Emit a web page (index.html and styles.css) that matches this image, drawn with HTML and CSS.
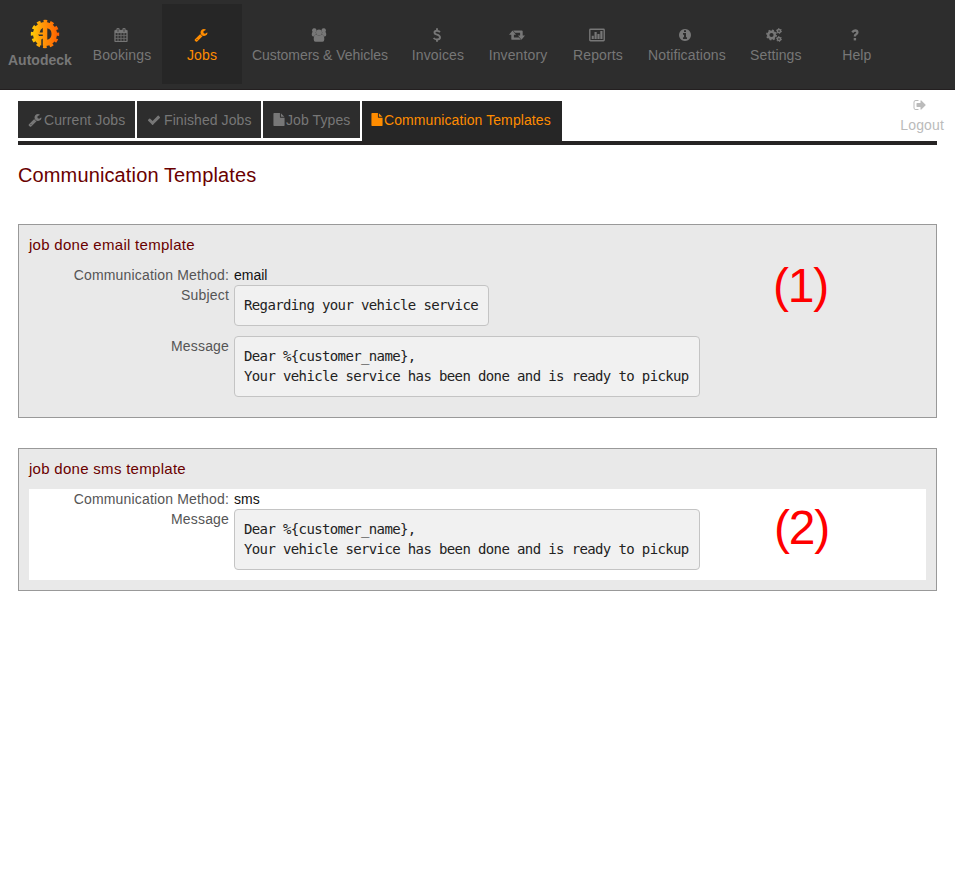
FILE: index.html
```
<!DOCTYPE html>
<html lang="en">
<head>
<meta charset="utf-8">
<title>Autodeck - Communication Templates</title>
<link rel="stylesheet" href="styles.css">
</head>
<body>
<svg class="defs" width="0" height="0" aria-hidden="true">
<symbol id="wrench" viewBox="0 0 1792 1792"><path d="M448 1472q0-26-19-45t-45-19-45 19-19 45 19 45 45 19 45-19 19-45zm644-420l-682 682q-37 37-90 37-52 0-91-37l-106-108q-38-36-38-90 0-53 38-91l681-681q39 98 114.500 173.500t173.500 114.500zm634-435q0 39-23 106-47 134-164.500 217.500t-258.500 83.500q-185 0-316.500-131.500t-131.500-316.500 131.500-316.500 316.500-131.500q58 0 121.500 16.500t107.500 46.500q16 11 16 28t-16 28l-293 169v224l193 107q5-3 79-48.500t135.500-81 70.500-35.500q15 0 23.500 10t8.500 25z"/></symbol>
<symbol id="check" viewBox="0 0 1792 1792"><path d="M1671 566q0 40-28 68l-724 724-136 136q-28 28-68 28t-68-28l-136-136-362-362q-28-28-28-68t28-68l136-136q28-28 68-28t68 28l294 295 656-657q28-28 68-28t68 28l136 136q28 28 28 68z"/></symbol>
<symbol id="file" viewBox="128 0 1536 1792"><path d="M1152 512v-472q22 14 36 28l408 408q14 14 28 36h-472zm-128 32q0 40 28 68t68 28h544v1056q0 40-28 68t-68 28h-1344q-40 0-68-28t-28-68v-1600q0-40 28-68t68-28h800v544z"/></symbol>
</svg>
<header class="topbar">
  <a class="brand">
    <svg class="logo" viewBox="0 0 30 30">
      <defs><linearGradient id="sun" x1="1" y1="0" x2="29" y2="0" gradientUnits="userSpaceOnUse"><stop offset="0" stop-color="#ffd005"/><stop offset=".4" stop-color="#ff9a08"/><stop offset="1" stop-color="#ff5e00"/></linearGradient>
      <mask id="cut"><rect width="30" height="30" fill="#fff"/><path fill="#000" d="M17.300 9.300q4.200.8 4.200 5.700t-4.200 5.700zM12.800 8.800v4.700H9.600q.6-3.300 3.200-4.700zM8 15.500h4.800v1.500H9.200zM11.300 20.500l1.500-1v8.500l-1.500-.5z"/></mask></defs>
      <g mask="url(#cut)"><circle cx="15" cy="15" r="12" fill="url(#sun)"/><circle cx="15" cy="15" r="12.700" fill="none" stroke="url(#sun)" stroke-width="3" stroke-dasharray="3.700 2.950" stroke-dashoffset="1.850"/></g>
    </svg>
    <span class="brand-name">Autodeck</span>
  </a>
  <nav class="nav">
    <a class="item"><svg class="icon calendar" viewBox="0 0 1792 1792"><path d="M192 1664h288v-288h-288v288zm352 0h320v-288h-320v288zm-352-352h288v-320h-288v320zm352 0h320v-320h-320v320zm-352-384h288v-288h-288v288zm736 736h320v-288h-320v288zm-384-736h320v-288h-320v288zm768 736h288v-288h-288v288zm-384-352h320v-320h-320v320zm-352-864v-288q0-13-9.500-22.500t-22.500-9.500h-64q-13 0-22.500 9.500t-9.500 22.500v288q0 13 9.500 22.500t22.500 9.500h64q13 0 22.500-9.500t9.500-22.500zm736 864h288v-320h-288v320zm-384-384h320v-288h-320v288zm384 0h288v-288h-288v288zm32-480v-288q0-13-9.500-22.500t-22.500-9.500h-64q-13 0-22.500 9.500t-9.500 22.500v288q0 13 9.500 22.500t22.500 9.500h64q13 0 22.500-9.500t9.500-22.500zm384-64v1280q0 52-38 90t-90 38h-1408q-52 0-90-38t-38-90v-1280q0-52 38-90t90-38h128v-96q0-66 47-113t113-47h64q66 0 113 47t47 113v96h384v-96q0-66 47-113t113-47h64q66 0 113 47t47 113v96h128q52 0 90 38t38 90z"/></svg><span>Bookings</span></a>
    <a class="item active"><svg class="icon"><use href="#wrench"/></svg><span>Jobs</span></a>
    <a class="item people"><svg class="icon wide" viewBox="0 0 16 15"><path d="M3.200.4a2.300 2.300 0 0 1 2.200 2.200A4 4 0 0 0 5 7C3.900 7 3.300 8 3 9H1.500Q.2 8.800.2 7.300q0-2.800 1-3A2.300 2.300 0 0 1 3.200.4zM12.800.4a2.300 2.300 0 0 0-2.200 2.200A4 4 0 0 1 11 7c1.100 0 1.700 1 2 2h1.500q1.300-.2 1.300-1.700 0-2.800-1-3A2.300 2.300 0 0 0 12.800.4z"/><circle cx="8" cy="4.800" r="3.200"/><path d="M5.200 7q2.800 2 5.600 0 2.900.3 2.900 5 0 2.700-2 2.700H4.300q-2 0-2-2.700 0-4.700 2.900-5z"/></svg><span>Customers &amp; Vehicles</span></a>
    <a class="item"><svg class="icon" viewBox="0 0 14 14"><path class="line" d="M10 4Q8.600 2.700 6.900 2.700 4.500 2.700 4.500 4.500q0 1.500 2.500 2.200 3 .8 3 2.700 0 2.100-2.900 2.100-2.200 0-3.500-1.500M7 .2v2.500m0 8.500v2.500"/></svg><span>Invoices</span></a>
    <a class="item"><svg class="icon wide" viewBox="0 0 16 14"><path d="M3.500 2.400l3.500 4.300H4.900v2.700h5l2 2.400H3.200q-.9 0-.9-.9V6.700H0zM12.500 11.800L9 7.500h2.100V4.800h-5l-2-2.400h8.700q.9 0 .9.900v4.200H16z"/></svg><span>Inventory</span></a>
    <a class="item"><svg class="icon wide" viewBox="0 0 16 14"><path fill-rule="evenodd" d="M1.500.5h13q1.400 0 1.400 1.400v10.200q0 1.400-1.400 1.400h-13Q.1 13.500.1 12.100V1.900Q.1.500 1.500.5zM1.500 1.900v10.200h13V1.900zM2.700 7.700h2.100V11H2.700zM5.500 4h2.200v7H5.500zM8.400 6h2.200v5H8.400zM11.300 3h2.200v8h-2.200z"/></svg><span>Reports</span></a>
    <a class="item"><svg class="icon" viewBox="0 0 1792 1792"><path d="M1152 1376v-160q0-14-9-23t-23-9h-96v-512q0-14-9-23t-23-9h-320q-14 0-23 9t-9 23v160q0 14 9 23t23 9h96v320h-96q-14 0-23 9t-9 23v160q0 14 9 23t23 9h448q14 0 23-9t9-23zm-128-896v-160q0-14-9-23t-23-9h-192q-14 0-23 9t-9 23v160q0 14 9 23t23 9h192q14 0 23-9t9-23zm640 416q0 209-103 385.500t-279.500 279.500-385.500 103-385.500-103-279.500-279.500-103-385.500 103-385.500 279.500-279.500 385.500-103 385.500 103 279.500 279.500 103 385.500z"/></svg><span>Notifications</span></a>
    <a class="item"><svg class="icon wide" viewBox="0 0 16 14"><g class="gear"><circle cx="5.500" cy="7" r="3.300" stroke-width="2.400"/><circle cx="5.500" cy="7" r="4.700" stroke-width="1.500" stroke-dasharray="1.850 1.840"/><circle cx="13" cy="3" r="1.600" stroke-width="1.500"/><circle cx="13" cy="3" r="2.500" stroke-width="1" stroke-dasharray="1.309"/><circle cx="13" cy="11" r="1.600" stroke-width="1.500"/><circle cx="13" cy="11" r="2.500" stroke-width="1" stroke-dasharray="1.309"/></g></svg><span>Settings</span></a>
    <a class="item help"><svg class="icon" viewBox="0 0 14 14"><path class="line query" d="M4.300 4.400Q5.300 2.500 7.200 2.500q2.200 0 2.200 1.900 0 1-1.300 1.800-1.200.7-1.200 1.900v.4"/><path d="M5.700 10h2.400v2.400H5.700z"/></svg><span>Help</span></a>
  </nav>
</header>
<main class="page">
  <div class="subbar">
    <nav class="tabs">
      <a class="tab t1"><svg class="icon"><use href="#wrench"/></svg><span>Current Jobs</span></a>
      <a class="tab t2"><svg class="icon"><use href="#check"/></svg><span>Finished Jobs</span></a>
      <a class="tab t3"><svg class="icon file"><use href="#file"/></svg><span>Job Types</span></a>
      <a class="tab t4 current"><svg class="icon file"><use href="#file"/></svg><span>Communication Templates</span></a>
    </nav>
    <a class="logout"><svg class="icon" viewBox="0 0 1792 1792"><path d="M704 1440q0 4 1 20t.5 26.500-3 23.500-10 19.500-20.500 6.500h-320q-119 0-203.500-84.500t-84.500-203.500v-704q0-119 84.500-203.500t203.500-84.500h320q13 0 22.500 9.500t9.500 22.500q0 4 1 20t.5 26.500-3 23.500-10 19.500-20.500 6.500h-320q-66 0-113 47t-47 113v704q0 66 47 113t113 47h312l11.500 1 11.500 3 8 5.500 7 9 2 13.500zm928-544q0 26-19 45l-544 544q-19 19-45 19t-45-19-19-45v-288h-448q-26 0-45-19t-19-45v-384q0-26 19-45t45-19h448v-288q0-26 19-45t45-19 45 19l544 544q19 19 19 45z"/></svg><span>Logout</span></a>
  </div>
  <h1>Communication Templates</h1>
  <section class="card">
    <h2>job done email template</h2>
    <dl>
      <dt>Communication Method:</dt><dd>email</dd>
      <dt>Subject</dt><dd><pre>Regarding your vehicle service</pre></dd>
      <dt>Message</dt><dd><pre>Dear %{customer_name},
Your vehicle service has been done and is ready to pickup</pre></dd>
    </dl>
    <span class="mark first">(1)</span>
  </section>
  <section class="card">
    <h2>job done sms template</h2>
    <dl class="plain">
      <dt>Communication Method:</dt><dd>sms</dd>
      <dt>Message</dt><dd><pre>Dear %{customer_name},
Your vehicle service has been done and is ready to pickup</pre></dd>
    </dl>
    <span class="mark second">(2)</span>
  </section>
</main>
</body>
</html>
```
FILE: styles.css
```
* { box-sizing: border-box; }
body { margin: 0; background: #fff; color: #111; font: 14px/20px "Liberation Sans", Arial, sans-serif; }
.defs { position: absolute; }
.topbar { display: flex; height: 90px; background: #2d2d2d; border-bottom: 1px solid #231f20; color: #777; }
.brand { width: 82px; padding-top: 19px; }
.logo { display: block; width: 30px; height: 30px; margin-left: 30px; }
.brand-name { display: block; margin: 1px 0 0 8px; font-weight: bold; white-space: nowrap; }
.nav { display: flex; padding-top: 4px; letter-spacing: .12px; }
.item { display: flex; flex-direction: column; align-items: center; min-width: 80px; height: 80px; padding: 24px 10px 0; white-space: nowrap; }
.people { width: 156px; letter-spacing: -.04px; }
.help { padding-left: 12px; }
.icon { display: block; width: 14px; height: 14px; fill: currentColor; flex: none; }
.item .icon { margin: 0 3px 3px 0; }
.item .wide { width: 16px; }
.calendar { stroke: currentColor; stroke-width: 36; }
.item.active { background: #262626; color: #ff8c00; }
.line { fill: none; stroke: currentColor; stroke-width: 1.9; }
.query { stroke-width: 2.3; }
.gear { fill: none; stroke: currentColor; }
.page { padding: 0 18px; }
.subbar { display: flex; justify-content: space-between; height: 55px; padding-top: 11px; border-bottom: 4px solid #262424; }
.tabs { display: flex; gap: 2px; letter-spacing: .09px; }
.tab { display: flex; height: 37px; padding: 9px 0 0 10px; background: #2d2d2d; color: #777; white-space: nowrap; }
.tab .icon { margin: 3px 2px 0 0; }
.tab .file { width: 12px; height: 13px; margin-right: 1px; }
.t1 { width: 117px; }
.t2 { width: 124px; }
.tab.t2 .icon { margin-right: 3px; }
.t3 { width: 97px; }
.t4 { width: 200px; padding-left: 9px; }
.tab.current { height: 40px; background: #262626; color: #ff8c00; }
.logout { display: flex; flex-direction: column; align-items: center; margin: -4px -7px 0 0; color: #bbb; letter-spacing: .15px; }
.logout .icon { margin: 1px 4px 3px 0; }
h1 { margin: 20px 0 39px; color: #6a0000; font-size: 20px; font-weight: normal; line-height: 20px; letter-spacing: .13px; }
.card { position: relative; margin-bottom: 30px; padding: 10px; background: #e9e9e9; border: 1px solid #999; }
h2 { margin: 0 0 10px; color: #6a0000; font-size: 15px; font-weight: normal; line-height: 20px; letter-spacing: .29px; }
dl { display: grid; grid-template-columns: 200px 1fr; column-gap: 5px; margin: 0; }
dt { color: #555; text-align: right; letter-spacing: .17px; }
dd { margin: 0; }
.plain { background: #fff; }
pre { width: fit-content; margin: 0 0 10px; padding: 8.5px 10px 10.5px 9px; border: 1px solid #c4c4c4; border-radius: 4px; background: #f1f1f1; color: #222; font: 14px/20px "DejaVu Sans Mono", monospace; letter-spacing: -.628px; }
.mark { position: absolute; left: 754px; color: red; font-size: 48px; line-height: 48px; letter-spacing: -1.2px; }
.first { top: 37px; }
.second { left: 755px; top: 55px; }
```
